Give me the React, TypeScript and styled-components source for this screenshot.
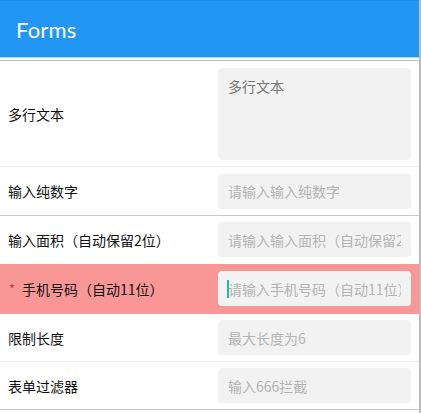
import React from "react";
import styled, { createGlobalStyle } from "styled-components";

const Global = createGlobalStyle`
  html, body { margin: 0; padding: 0; background: #fff; }
  body { font-family: "Noto Sans CJK SC", "Noto Sans", sans-serif; }
  * { box-sizing: border-box; }
`;

const Page = styled.div`
  width: 421px;
  height: 413px;
  overflow: hidden;
  background: #fff;
  border-right: 2px solid #bdbdbd;
`;

const Header = styled.header`
  height: 58px;
  background: #2196f3;
  border-top: 1px solid #1e88e5;
  border-bottom: 1px solid #a9d6fb;
  display: flex;
  align-items: center;
  padding-left: 16px;
  color: #fff;
  font-family: "Lato", "Noto Sans", sans-serif;
  font-size: 22px;
  font-weight: 400;
  letter-spacing: 0.2px;
`;

const HeaderGap = styled.div`
  height: 3px;
  background: #fff;
  border-bottom: 1px solid #c4c4c4;
`;

const Row = styled.div<{ $bg?: string; $line?: string; $h: number }>`
  display: grid;
  grid-template-columns: 1fr 193px;
  align-items: center;
  height: ${(p) => p.$h}px;
  padding: 0 8px;
  background: ${(p) => p.$bg || "#fff"};
  border-bottom: 1px solid ${(p) => p.$line || "transparent"};
`;

const Label = styled.label`
  font-size: 14px;
  color: #111;
  display: flex;
  align-items: center;
  white-space: nowrap;
`;

const Star = styled.span`
  color: #d32f2f;
  font-size: 13px;
  margin-left: 1px;
  margin-right: 7px;
`;

const Input = styled.input`
  width: 193px;
  height: 35px;
  border: none;
  outline: none;
  border-radius: 4px;
  background: #f2f2f2;
  padding: 0 10px;
  font-family: "Noto Sans CJK SC", "Noto Sans", sans-serif;
  font-size: 14px;
  color: #333;
  &::placeholder { color: #b4b4b4; }
`;

const Caret = styled.span`
  position: absolute;
  left: 9px;
  top: 9px;
  width: 2px;
  height: 18px;
  background: #16c2a0;
`;

const FieldWrap = styled.div`
  position: relative;
  width: 193px;
`;

const Area = styled.textarea`
  width: 193px;
  height: 92px;
  border: none;
  outline: none;
  resize: none;
  border-radius: 4px;
  background: #f2f2f2;
  padding: 8px 10px;
  font-family: "Noto Sans CJK SC", "Noto Sans", sans-serif;
  font-size: 14px;
  line-height: 20px;
  &::placeholder { color: #777; }
`;

export default function App() {
  return (
    <>
      <Global />
      <Page>
        <Header>Forms</Header>
        <HeaderGap />
        <Row $h={106} $line="#f0f0f0">
          <Label>多行文本</Label>
          <Area placeholder="多行文本" />
        </Row>
        <Row $h={49} $line="#c8c8c8">
          <Label>输入纯数字</Label>
          <Input placeholder="请输入输入纯数字" />
        </Row>
        <Row $h={48}>
          <Label>输入面积（自动保留2位）</Label>
          <Input placeholder="请输入输入面积（自动保留2位）" />
        </Row>
        <Row $h={50} $bg="#f99797">
          <Label>
            <Star>*</Star>手机号码（自动11位）
          </Label>
          <FieldWrap>
            <Input placeholder="请输入手机号码（自动11位）" />
            <Caret />
          </FieldWrap>
        </Row>
        <Row $h={48} $line="#ececec">
          <Label>限制长度</Label>
          <Input placeholder="最大长度为6" />
        </Row>
        <Row $h={48} $line="#c8c8c8">
          <Label>表单过滤器</Label>
          <Input placeholder="输入666拦截" />
        </Row>
      </Page>
    </>
  );
}
